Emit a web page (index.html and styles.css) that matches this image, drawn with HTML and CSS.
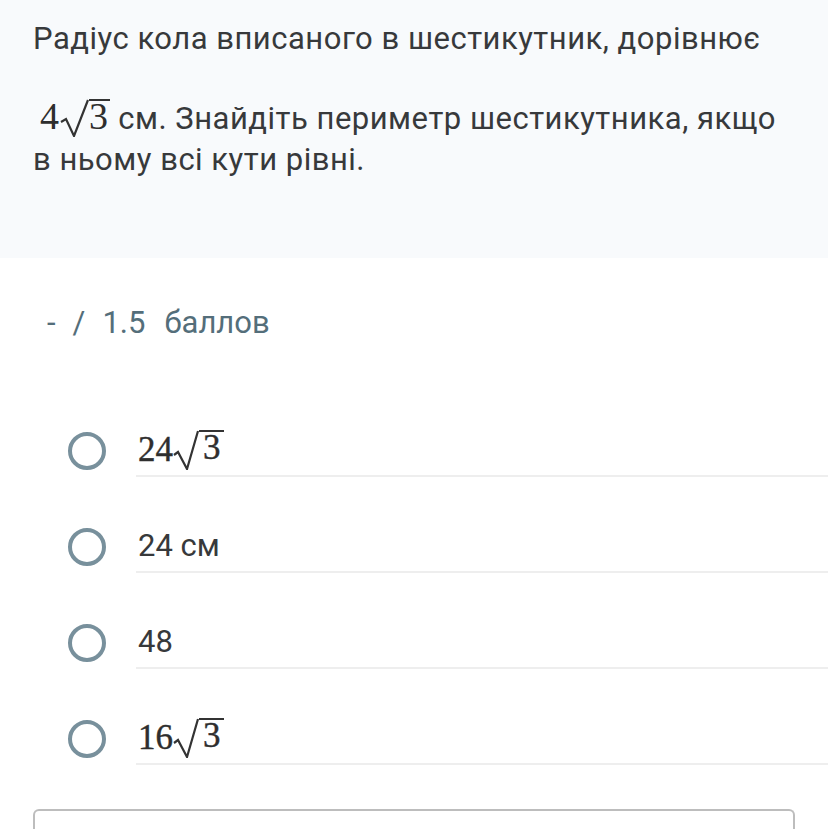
FILE: index.html
```html
<!DOCTYPE html>
<html>
<head>
  <title>Тест</title>
  <link rel="stylesheet" href="styles.css">
</head>
<body>
  <div id="question">
    <p class="q-line">Радіус кола вписаного в шестикутник, дорівнює</p>
    <p class="q-text">
      <span class="math small">4<span class="sqrt"><svg class="rad" width="30" height="38" viewBox="0 0 30 38"><path d="M2 23 L7 20 L15 37 L29 1" fill="none" stroke="#333" stroke-width="2.2"/></svg><span class="radicand">3</span></span></span> см. Знайдіть периметр шестикутника, якщо в ньому всі кути рівні.
    </p>
  </div>

  <div id="score">
    <span>-</span><span>/</span><span>1.5</span><span>баллов</span>
  </div>

  <div id="options">
    <div class="option">
      <div class="radio"></div>
      <div class="label"><span class="math">24<span class="sqrt"><svg class="rad" width="26" height="40" viewBox="0 0 26 40"><path d="M1 25 L5 22 L14 39 L25 1" fill="none" stroke="#333" stroke-width="2.2"/></svg><span class="radicand">3</span></span></span></div>
    </div>
    <div class="option">
      <div class="radio"></div>
      <div class="label">24 см</div>
    </div>
    <div class="option">
      <div class="radio"></div>
      <div class="label">48</div>
    </div>
    <div class="option">
      <div class="radio"></div>
      <div class="label"><span class="math">16<span class="sqrt"><svg class="rad" width="26" height="40" viewBox="0 0 26 40"><path d="M1 25 L5 22 L14 39 L25 1" fill="none" stroke="#333" stroke-width="2.2"/></svg><span class="radicand">3</span></span></span></div>
    </div>
  </div>

  <div id="answerBox"></div>
</body>
</html>
```

FILE: styles.css
```css
body {
  margin: 0;
  background-color: #fff;
  font-family: Roboto, "Noto Sans", sans-serif;
  color: #37393b;
  overflow: hidden;
  height: 829px;
}
#question {
  background-color: #f8fafc;
  padding: 18px 33px 80px 33px;
  height: 160px;
}
#question p {
  margin: 0;
  font-size: 31px;
  letter-spacing: 0.5px;
  line-height: 41px;
}
.q-line {
  margin-bottom: 37px !important;
}
.math {
  font-family: "Liberation Serif", "DejaVu Serif", serif;
  font-size: 35px;
  letter-spacing: 0;
  white-space: nowrap;
  color: #2e2e2e;
  -webkit-text-stroke: 0.4px #2e2e2e;
}
.math.small {
  font-size: 38px;
  margin-left: 7px;
  -webkit-text-stroke: 0;
}
.sqrt {
  display: inline-flex;
  align-items: flex-start;
  vertical-align: -9px;
}
.rad {
  display: block;
}
.radicand {
  border-top: 2px solid #333;
  line-height: 31px;
  padding-left: 4px;
  padding-right: 3px;
}
.small .sqrt {
  vertical-align: -8px;
}
.small .radicand {
  line-height: 30px;
  padding-left: 0;
  padding-right: 2px;
}
#score {
  display: flex;
  align-items: center;
  height: 40px;
  margin-top: 44px;
  padding-left: 47px;
  font-size: 31px;
  color: #546e7a;
}
#score span {
  margin-right: 17px;
}
#score span:nth-child(3) {
  margin-right: 19px;
}
#options {
  margin-top: 83px;
}
.option {
  display: flex;
  align-items: center;
  margin-bottom: 44px;
}
.radio {
  width: 30px;
  height: 30px;
  border: 4px solid #78909c;
  border-radius: 50%;
  margin-left: 68px;
  margin-right: 30px;
  flex-shrink: 0;
}
.label {
  flex: 1;
  height: 50px;
  line-height: 50px;
  border-bottom: 2px solid #eeeeee;
  padding-left: 2px;
  font-size: 31px;
}
#answerBox {
  margin: 2px 0 0 33px;
  width: 758px;
  height: 40px;
  border: 2px solid #bdbdbd;
  border-bottom: none;
  border-radius: 6px 6px 0 0;
}
```
